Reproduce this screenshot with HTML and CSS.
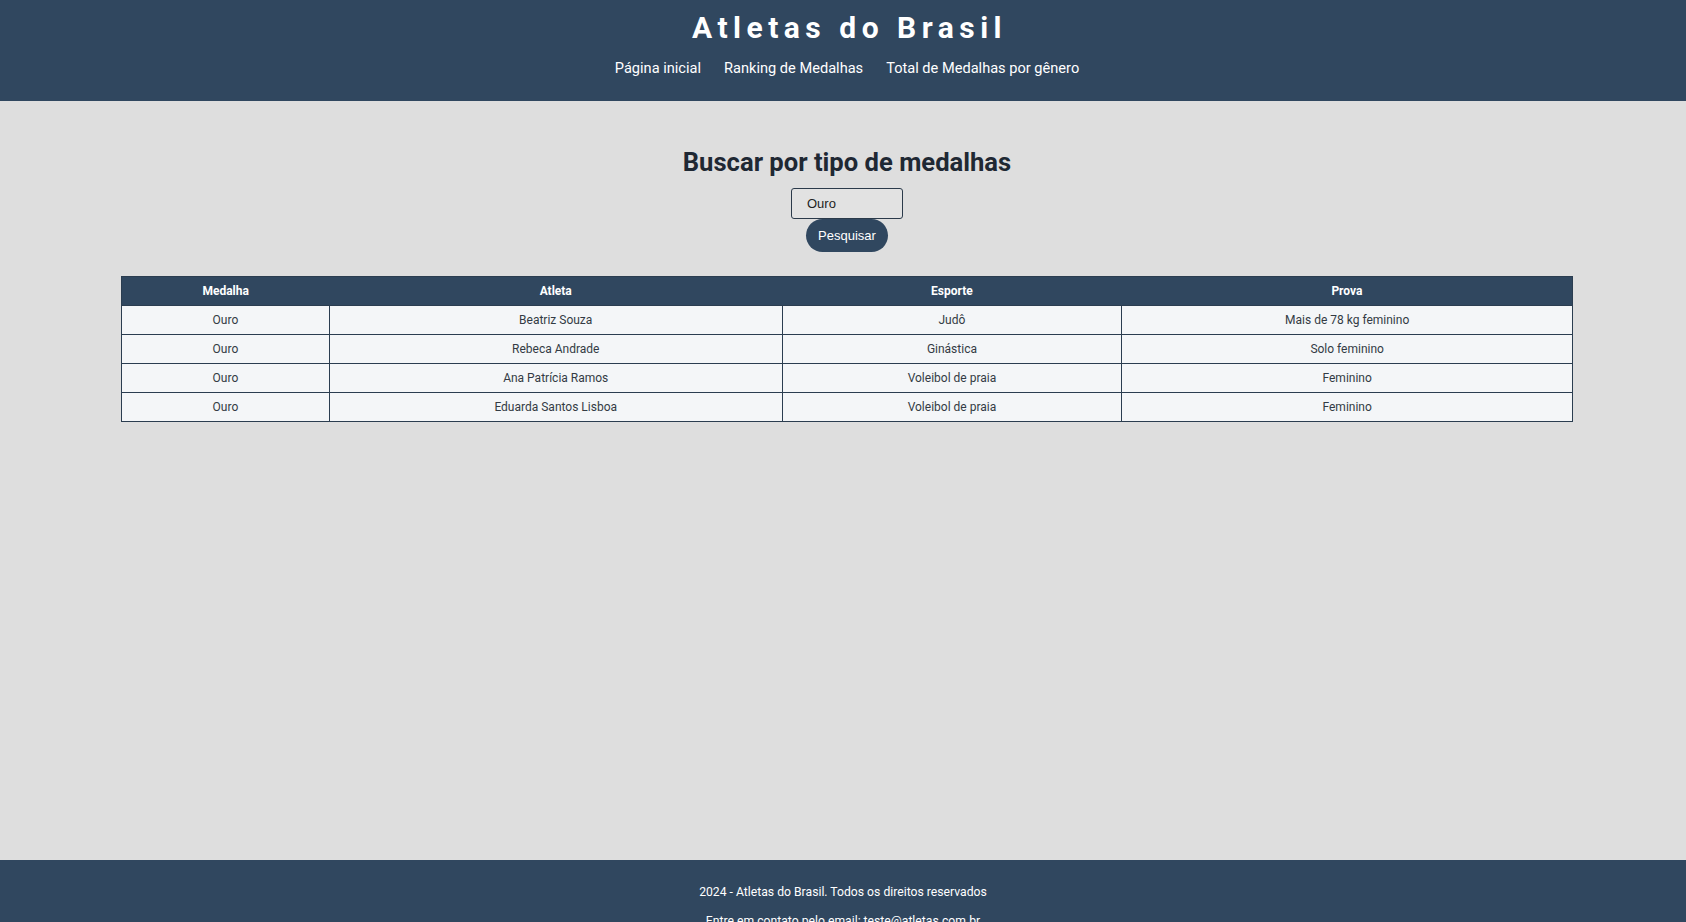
FILE: index.html
```html
<!DOCTYPE html>
<html lang="pt-BR">
<head>
<meta charset="utf-8">
<title>Atletas do Brasil</title>
<link rel="stylesheet" href="styles.css">
</head>
<body>
<header class="site-header">
  <h1 class="site-title">Atletas do Brasil</h1>
  <nav class="site-nav">
    <a href="#">Página inicial</a>
    <a href="#">Ranking de Medalhas</a>
    <a href="#">Total de Medalhas por gênero</a>
  </nav>
</header>
<main class="content">
  <h2 class="search-title">Buscar por tipo de medalhas</h2>
  <form class="search-form">
    <input class="search-input" type="text" value="Ouro">
    <button class="search-button" type="button">Pesquisar</button>
  </form>
  <table class="results">
    <thead>
      <tr>
        <th class="col-medal">Medalha</th>
        <th class="col-athlete">Atleta</th>
        <th class="col-sport">Esporte</th>
        <th class="col-event">Prova</th>
      </tr>
    </thead>
    <tbody>
      <tr><td>Ouro</td><td>Beatriz Souza</td><td>Judô</td><td>Mais de 78 kg feminino</td></tr>
      <tr><td>Ouro</td><td>Rebeca Andrade</td><td>Ginástica</td><td>Solo feminino</td></tr>
      <tr><td>Ouro</td><td>Ana Patrícia Ramos</td><td>Voleibol de praia</td><td>Feminino</td></tr>
      <tr><td>Ouro</td><td>Eduarda Santos Lisboa</td><td>Voleibol de praia</td><td>Feminino</td></tr>
    </tbody>
  </table>
</main>
<footer class="site-footer">
  <p>2024 - Atletas do Brasil. Todos os direitos reservados</p>
  <p>Entre em contato pelo email: teste@atletas.com.br</p>
</footer>
</body>
</html>
```

FILE: styles.css
```css
* { box-sizing: border-box; }

body {
  margin: 0;
  background: #dedede;
  font-family: "Roboto", "Liberation Sans", sans-serif;
  color: #222a33;
}

.site-header {
  background: #30475f;
  height: 101px;
  padding: 9px 0 0 8px;
  text-align: center;
  color: #ffffff;
}

.site-title {
  margin: 0;
  font-size: 30px;
  line-height: 38px;
  font-weight: 700;
  letter-spacing: 5.5px;
  padding-left: 5px;
}

.site-nav {
  margin-top: 11px;
  display: flex;
  justify-content: center;
  gap: 23px;
}

.site-nav a {
  color: #ffffff;
  text-decoration: none;
  font-size: 14.6px;
  line-height: 20px;
}

.content {
  min-height: 759px;
  padding: 44px 0 0 8px;
  display: flex;
  flex-direction: column;
  align-items: center;
}

.search-title {
  margin: 0;
  font-size: 25.6px;
  line-height: 34px;
  font-weight: 700;
  color: #1f2833;
}

.search-form {
  margin-top: 9px;
  display: flex;
  flex-direction: column;
  align-items: center;
}

.search-input {
  width: 112px;
  height: 31px;
  border: 1px solid #2b3a4a;
  border-radius: 3px;
  background: #e2e2e2;
  padding: 0 15px;
  font-family: "Liberation Sans", Arial, sans-serif;
  font-size: 13px;
  color: #222222;
}

.search-button {
  width: 82px;
  height: 33px;
  border: none;
  border-radius: 17px;
  background: #30475f;
  color: #ffffff;
  font-family: "Liberation Sans", Arial, sans-serif;
  font-size: 13px;
}

.results {
  margin-top: 24px;
  width: 1452px;
  border-collapse: collapse;
  border: 1px solid #2b3d50;
  font-size: 12px;
}

.results th {
  background: #30475f;
  color: #ffffff;
  height: 29px;
  font-weight: 700;
  padding: 0 8px;
}

.results td {
  background: #f4f6f8;
  height: 29px;
  text-align: center;
  border: 1px solid #2b3d50;
  padding: 0 8px;
  color: #333b44;
}

.col-medal { width: 208px; }
.col-athlete { width: 453px; }
.col-sport { width: 340px; }
.col-event { width: 451px; }

.site-footer {
  background: #30475f;
  color: #ffffff;
  text-align: center;
  padding: 24px 0 4px;
  font-size: 12.2px;
}

.site-footer p {
  margin: 0 0 13px;
  line-height: 16px;
}
```
